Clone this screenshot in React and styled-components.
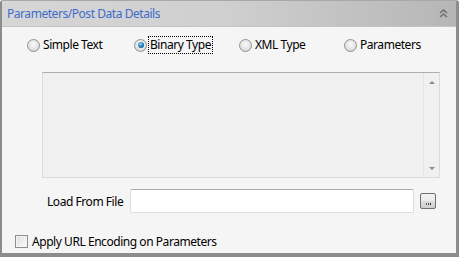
import React from "react";
import styled, { createGlobalStyle } from "styled-components";

const GlobalStyle = createGlobalStyle`
  html, body {
    margin: 0;
    padding: 0;
    background: #ffffff;
  }
  body {
    font-family: "Noto Sans", "DejaVu Sans", sans-serif;
    font-size: 12px;
    color: #000000;
  }
`;

const Panel = styled.div`
  width: 459px;
  height: 257px;
  box-sizing: border-box;
  border-top: 1px solid #a8a8a8;
  border-left: 2px solid #8c8c8c;
  border-right: 3px solid #8c8c8c;
  border-bottom: 4px solid #8c8c8c;
  border-radius: 3px 3px 0 0;
  background: #f5f5f5;
  display: flex;
  flex-direction: column;
`;

const Header = styled.div`
  height: 25px;
  flex: none;
  display: flex;
  align-items: center;
  justify-content: space-between;
  padding: 0 8px 0 5px;
  background: linear-gradient(to right, #d6d6d6 0%, #cfcfcf 50%, #b6b6b6 100%);
  border-bottom: 1px solid #c4c4c4;
`;

const Title = styled.span`
  color: #3e6ccc;
  font-size: 12px;
  letter-spacing: -0.45px;
`;

const Body = styled.div`
  flex: 1;
  display: flex;
  flex-direction: column;
  padding: 9px 0 0 0;
`;

const RadioRow = styled.div`
  display: flex;
  align-items: center;
  height: 18px;
  padding-left: 25px;
`;

const RadioItem = styled.label`
  display: flex;
  align-items: center;
  width: ${(p) => p.$w}px;
  flex: none;
`;

const RadioDot = styled.span`
  width: 13px;
  height: 13px;
  border-radius: 50%;
  box-sizing: border-box;
  border: 1px solid #929292;
  background: radial-gradient(circle at 50% 40%, #fafafa 0%, #e4e4e4 55%, #c8c8c8 100%);
  margin-right: 2px;
  display: flex;
  align-items: center;
  justify-content: center;
  flex: none;
  &::after {
    content: "";
    display: ${(p) => (p.$on ? "block" : "none")};
    width: 6px;
    height: 6px;
    border-radius: 50%;
    background: radial-gradient(circle at 40% 35%, #8ad6f7 0%, #1a6fb0 60%, #0d3f73 100%);
  }
`;

const RadioText = styled.span`
  letter-spacing: -0.45px;
  padding: 0 1px;
  line-height: 16px;
  outline: ${(p) => (p.$focus ? "1px dotted #000" : "none")};
`;

const EditorWrap = styled.div`
  margin: 18px 0 0 40px;
  width: 398px;
  height: 106px;
  box-sizing: border-box;
  border: 1px solid #dadae0;
  border-top-color: #aeaeae;
  background: #f0f0f0;
  display: flex;
  justify-content: flex-end;
`;

const ScrollBar = styled.div`
  width: 16px;
  height: 100%;
  box-sizing: border-box;
  border-left: 1px solid #e4e4e4;
  display: flex;
  flex-direction: column;
  align-items: center;
  justify-content: space-between;
  padding: 8px 0 7px;
`;

const Arrow = styled.span`
  width: 0;
  height: 0;
  border-left: 3px solid transparent;
  border-right: 3px solid transparent;
  ${(p) => (p.$down ? "border-top: 3px solid #8a8a8a;" : "border-bottom: 3px solid #8a8a8a;")}
`;

const FileRow = styled.div`
  display: flex;
  align-items: center;
  margin-top: 11px;
  padding-left: 45px;
  height: 24px;
`;

const FileLabel = styled.span`
  width: 83px;
  flex: none;
  letter-spacing: -0.45px;
`;

const FileInput = styled.div`
  width: 284px;
  height: 24px;
  box-sizing: border-box;
  border: 1px solid #dcdcdc;
  border-top-color: #acacac;
  border-radius: 2px;
  background: #ffffff;
`;

const BrowseButton = styled.div`
  width: 16px;
  height: 16px;
  margin-left: 6px;
  box-sizing: border-box;
  border: 1px solid #707070;
  border-radius: 2px;
  background: linear-gradient(to bottom, #f2f2f2 0%, #ebebeb 50%, #dddddd 51%, #cfcfcf 100%);
  display: flex;
  align-items: flex-end;
  justify-content: center;
  padding-bottom: 3px;
  gap: 1px;
`;

const Pip = styled.span`
  width: 1px;
  height: 2px;
  background: ${(p) => p.$c};
`;

const CheckRow = styled.label`
  display: flex;
  align-items: center;
  margin-top: 20px;
  padding-left: 13px;
`;

const CheckBox = styled.span`
  width: 13px;
  height: 13px;
  box-sizing: border-box;
  border: 1px solid #8f8f8f;
  background: linear-gradient(135deg, #dcdcdc 0%, #f4f4f4 70%, #ffffff 100%);
  box-shadow: inset 0 0 0 1px #f4f4f4;
  margin-right: 4px;
  flex: none;
`;

const CheckText = styled.span`
  letter-spacing: -0.45px;
`;

const options = [
  { label: "Simple Text", w: 107 },
  { label: "Binary Type", w: 105, on: true },
  { label: "XML Type", w: 105 },
  { label: "Parameters", w: 90 },
];

function App() {
  return (
    <>
      <GlobalStyle />
      <Panel>
        <Header>
          <Title>Parameters/Post Data Details</Title>
          <svg width="9" height="9" viewBox="0 0 9 9">
            <path d="M1 4 L4.5 1 L8 4 M1 8 L4.5 5 L8 8" stroke="#6e6e6e" strokeWidth="1.6" fill="none" />
          </svg>
        </Header>
        <Body>
          <RadioRow>
            {options.map((o) => (
              <RadioItem key={o.label} $w={o.w}>
                <RadioDot $on={o.on} />
                <RadioText $focus={o.on}>{o.label}</RadioText>
              </RadioItem>
            ))}
          </RadioRow>
          <EditorWrap>
            <ScrollBar>
              <Arrow />
              <Arrow $down />
            </ScrollBar>
          </EditorWrap>
          <FileRow>
            <FileLabel>Load From File</FileLabel>
            <FileInput />
            <BrowseButton>
              <Pip $c="#c03030" />
              <Pip $c="#3050c0" />
              <Pip $c="#303030" />
            </BrowseButton>
          </FileRow>
          <CheckRow>
            <CheckBox />
            <CheckText>Apply URL Encoding on Parameters</CheckText>
          </CheckRow>
        </Body>
      </Panel>
    </>
  );
}

export default App;
